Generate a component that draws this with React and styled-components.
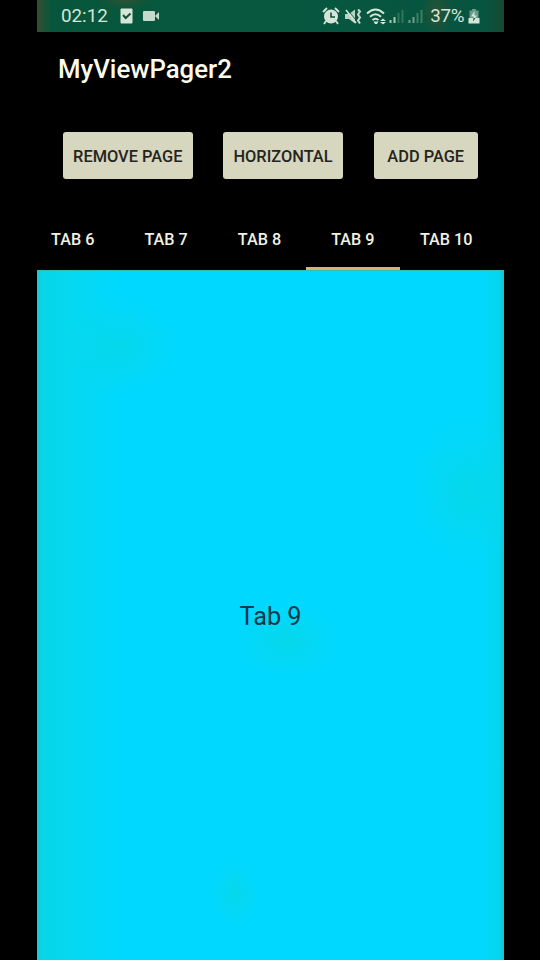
import React from "react";
import styled, { createGlobalStyle } from "styled-components";

const GlobalStyle = createGlobalStyle`
  * { box-sizing: border-box; }
  body { margin: 0; background: #000; font-family: Roboto, "Liberation Sans", sans-serif; }
`;

const Stage = styled.div`
  height: 960px;
  padding: 0 36px 0 37px;
  background: #000;
  overflow: hidden;
`;

const Phone = styled.main`
  height: 100%;
  display: flex;
  flex-direction: column;
  overflow: hidden;
`;

const StatusBar = styled.header`
  flex: none;
  height: 32px;
  display: flex;
  align-items: center;
  justify-content: space-between;
  padding: 0 24px 0 24px;
  color: #d5e6d8;
  background:
    radial-gradient(ellipse 26px 10px at 88px 0, #2b5233 0, transparent 100%),
    radial-gradient(ellipse 16px 24px at 400px 12px, #2b5233 0, transparent 100%),
    linear-gradient(90deg, #34502f 0, #07563c 14px, #07583f 40%, #075440 96%, #164932 100%);
`;

const StatusGroup = styled.div`
  display: flex;
  align-items: center;
`;

const StatusText = styled.span`
  font-size: 18.8px;
  line-height: 33px;
  margin-left: ${(p) => p.$gap || 0}px;
  letter-spacing: ${(p) => p.$spacing || 0}px;
`;

const Glyph = styled.svg`
  flex: none;
  display: block;
  margin-left: ${(p) => p.$gap}px;
`;

const TitleBar = styled.h1`
  flex: none;
  height: 74px;
  margin: 0;
  padding-left: 21px;
  font-size: 25.8px;
  font-weight: 500;
  line-height: 74px;
  color: #fbfbec;
`;

const Actions = styled.div`
  flex: none;
  height: 104px;
  display: flex;
  align-items: flex-start;
  padding: 26.4px 0 0 26px;
  gap: 30.5px;
`;

const ActionButton = styled.button`
  width: ${(p) => p.$width}px;
  height: 46.5px;
  padding: 2px 0 0;
  border: 0;
  border-radius: 3px;
  background: #d7d6bf;
  color: #24251d;
  font: 500 16.4px/44px Roboto, "Liberation Sans", sans-serif;
  white-space: nowrap;
`;

const TabBar = styled.nav`
  flex: none;
  height: 60px;
  display: flex;
  margin-left: -11px;
`;

const Tab = styled.div`
  flex: 0 0 93.4px;
  height: 60px;
  text-align: center;
  font-size: 16.2px;
  font-weight: 500;
  line-height: 59px;
  color: #f1f1e2;
  border-bottom: 3px solid ${(p) => (p.$active ? "#dcb274" : "transparent")};
`;

const Page = styled.section`
  flex: 1;
  display: flex;
  align-items: center;
  justify-content: center;
  padding-top: 1px;
  border-top: 1px solid #2cc2b0;
  font-size: 25.2px;
  color: #08394d;
  background:
    radial-gradient(ellipse 56px 76px at 430px 220px, #06d7ea 0, transparent 100%),
    radial-gradient(ellipse 60px 50px at 80px 75px, #06d7ea 0, transparent 100%),
    radial-gradient(ellipse 54px 38px at 250px 370px, #06d7ea 0, transparent 100%),
    radial-gradient(ellipse 24px 34px at 198px 622px, #06d7ea 0, transparent 100%),
    linear-gradient(90deg, #16cbd0 0, #08d6e8 6px, #04d8f2 40px, #00d8ff 85px, #00d8ff 440px, #06d6ef 462px, #16c4cc 100%);
`;

const buttons = [
  { label: "REMOVE PAGE", width: 129.5 },
  { label: "HORIZONTAL", width: 120 },
  { label: "ADD PAGE", width: 104.5 },
];

const tabs = [6, 7, 8, 9, 10];

function CheckGlyph() {
  return (
    <Glyph $gap={12} width="13" height="16" viewBox="0 0 13 16">
      <rect x="0.5" y="0.5" width="12" height="15" rx="1" fill="#d5e6d8" />
      <path d="M3 7l2.7 3L10.5 5.5" fill="none" stroke="#174d3d" strokeWidth="2" />
    </Glyph>
  );
}

function CameraGlyph() {
  return (
    <Glyph $gap={10} width="17" height="12" viewBox="0 0 17 12">
      <rect x="0" y="1" width="12" height="10" rx="1" fill="#c4dbcc" />
      <path d="M12 6l4-4v8z" fill="#c4dbcc" />
    </Glyph>
  );
}

function AlarmGlyph() {
  return (
    <Glyph $gap={0} width="18" height="18" viewBox="0 0 18 18">
      <path d="M1 5l4-4M17 5l-4-4M4 14l-2 3M14 14l2 3" stroke="#d5e6d8" strokeWidth="1.8" />
      <circle cx="9" cy="9.5" r="7" fill="#d5e6d8" />
      <path d="M9 5.5v4.5h4" fill="none" stroke="#184d3d" strokeWidth="1.6" />
    </Glyph>
  );
}

function MuteGlyph() {
  return (
    <Glyph $gap={4.5} width="17" height="17" viewBox="0 0 17 17">
      <path d="M0 6h4l6-4.5v14L4 11H0z" fill="#b9d3c2" />
      <path d="M2 1l10 12.5" stroke="#0a5540" strokeWidth="0.8" />
      <path d="M1 2l10 13" stroke="#d5e6d8" strokeWidth="1.5" />
      <path d="M13 1.5l2 2-2 3 2 3-2 3 2 3" fill="none" stroke="#c7dccd" strokeWidth="2" />
    </Glyph>
  );
}

function WifiGlyph() {
  return (
    <Glyph $gap={4.5} width="21" height="17" viewBox="0 0 21 17">
      <g fill="none" stroke="#d5e6d8" strokeWidth="2">
        <path d="M1 5.5q8.5-8 17 0M4 8.8q5.5-5 11 0M6.5 12q3-2.5 6 0" />
      </g>
      <path d="M7.5 13.5h5L11 16H9z" fill="#d5e6d8" />
      <path d="M14 13l3-2.5L20 13zM14 14h6l-3 2.5z" fill="#d5e6d8" />
    </Glyph>
  );
}

function SignalGlyph({ gap, faint }) {
  return (
    <Glyph $gap={gap} width="16" height="16" viewBox="0 0 16 16">
      <path d="M1.5 15v-3M5.5 15V9" stroke="#aac6b0" strokeWidth="2" opacity={faint ? 0.65 : 1} />
      <path d="M9.5 15V5M13.5 15V2" stroke="#639b79" strokeWidth="2" opacity={faint ? 0.6 : 0.45} />
    </Glyph>
  );
}

function BatteryGlyph() {
  return (
    <Glyph $gap={4} width="12" height="16" viewBox="0 0 12 16">
      <path d="M4 1h4v1.5h2.5V10h-9V2.5H4z" fill="#659b88" />
      <path d="M.5 10h11v5.5H.5z" fill="#d5e6d8" />
      <path d="M6.5 3L3 8.5h2.8L5 13l4-5.5H6.5z" fill="#d5e6d8" />
      <path d="M5.5 10h2L5 13.5z" fill="#184d3d" />
    </Glyph>
  );
}

export default function App() {
  return (
    <Stage>
      <GlobalStyle />
      <Phone>
        <StatusBar>
          <StatusGroup>
            <StatusText>02:12</StatusText>
            <CheckGlyph />
            <CameraGlyph />
          </StatusGroup>
          <StatusGroup>
            <AlarmGlyph />
            <MuteGlyph />
            <WifiGlyph />
            <SignalGlyph gap={2} />
            <SignalGlyph gap={3} faint />
            <StatusText $gap={6} $spacing={-0.4}>37%</StatusText>
            <BatteryGlyph />
          </StatusGroup>
        </StatusBar>
        <TitleBar>MyViewPager2</TitleBar>
        <Actions>
          {buttons.map((b) => (
            <ActionButton key={b.label} $width={b.width}>
              {b.label}
            </ActionButton>
          ))}
        </Actions>
        <TabBar>
          {tabs.map((n) => (
            <Tab key={n} $active={n === 9}>
              TAB {n}
            </Tab>
          ))}
        </TabBar>
        <Page>Tab 9</Page>
      </Phone>
    </Stage>
  );
}
